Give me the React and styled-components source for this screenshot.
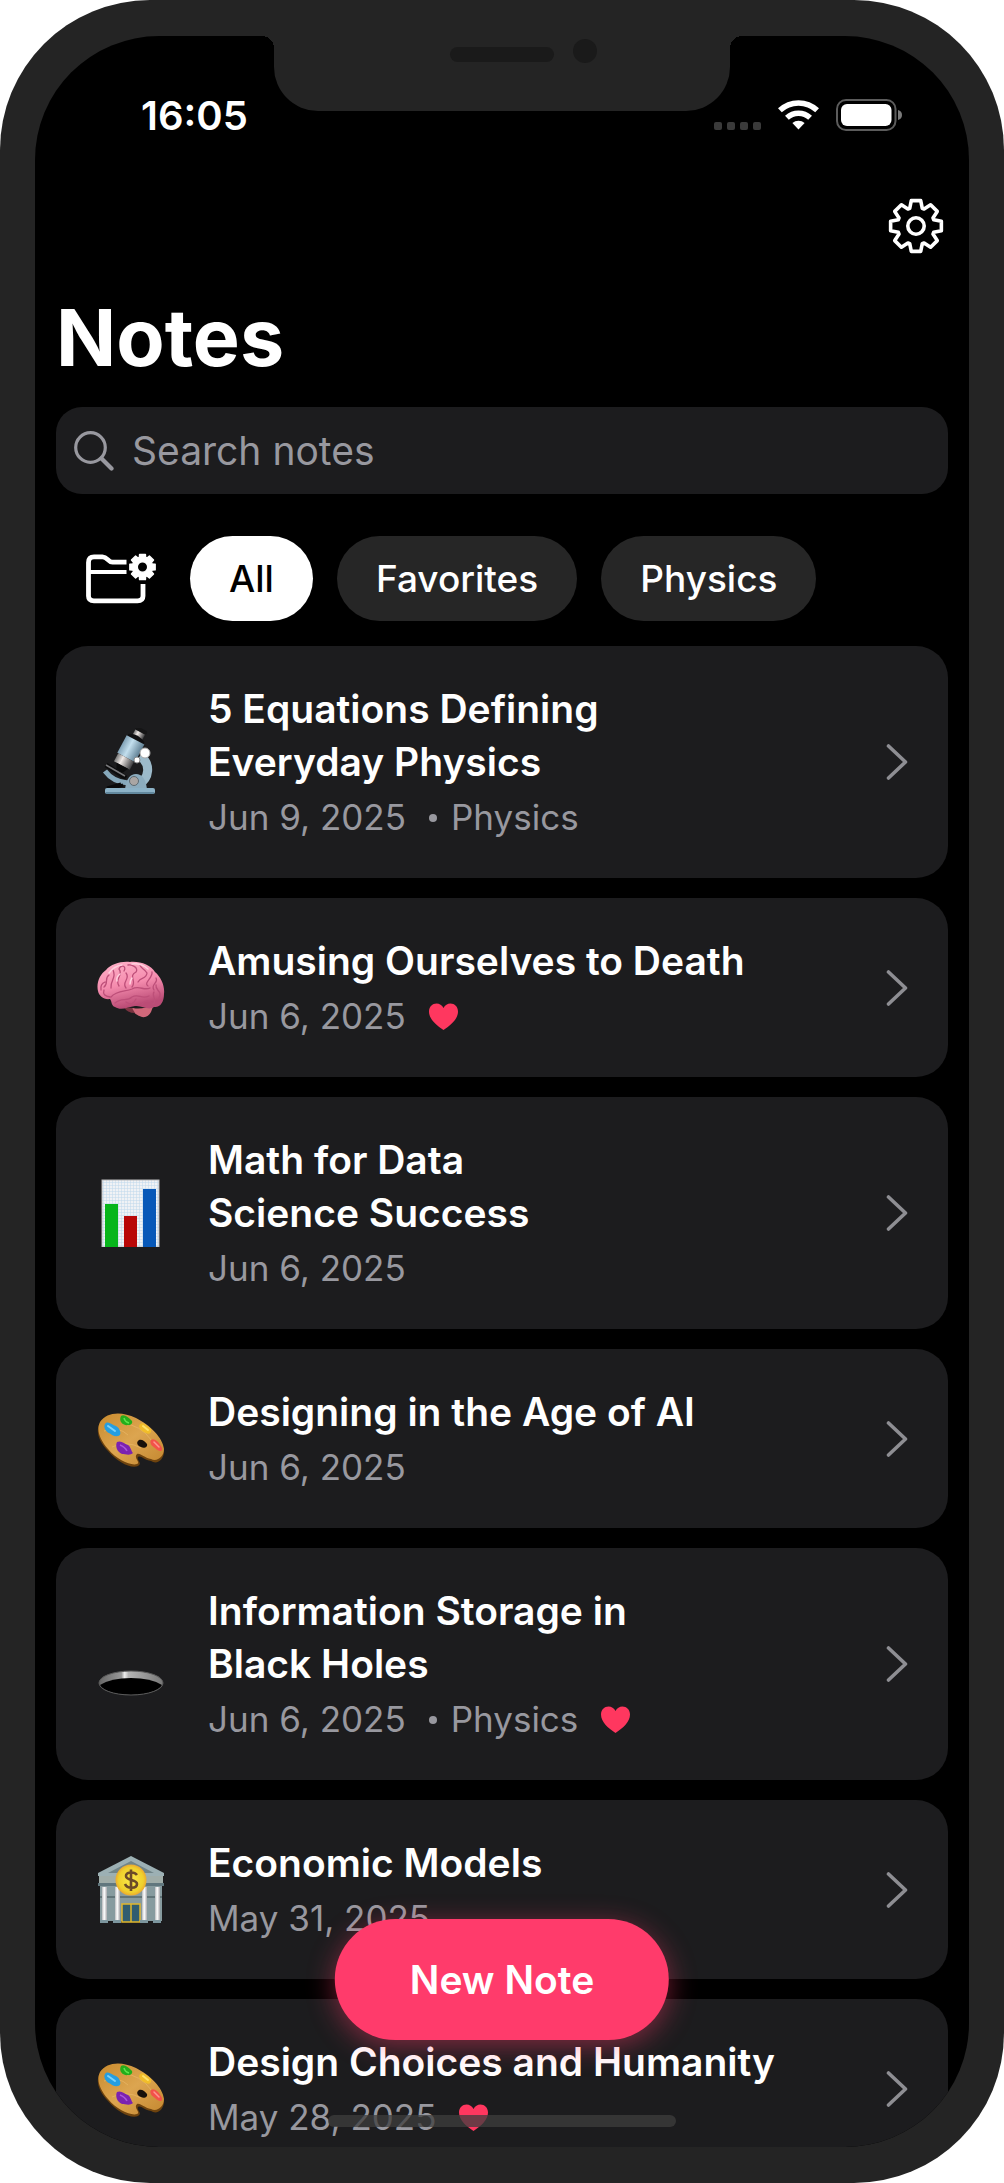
import React, { useState } from 'react'
import styled, { createGlobalStyle } from 'styled-components'


const GlobalStyle = createGlobalStyle`
    * {
        box-sizing: border-box;
    }
    body {
        margin: 0;
        background: #ffffff;
        font-family: Inter, "Liberation Sans", sans-serif;
    }
    button, input {
        font-family: inherit;
    }
`

const Phone = styled.div`
    height: 100vh;
    padding: 36px 35px;
    background: #242424;
    border-radius: 150px;
    display: flex;
`

const Screen = styled.div`
    position: relative;
    flex: 1;
    min-width: 0;
    overflow: hidden;
    border-radius: 124px;
    background: #000000;
    color: #ffffff;
    display: flex;
    flex-direction: column;
`

const Notch = styled.div`
    position: absolute;
    top: 0;
    left: 50%;
    width: 456px;
    height: 75px;
    margin-left: -228px;
    background: #242424;
    border-radius: 0 0 44px 44px;

    &::before, &::after {
        content: '';
        position: absolute;
        top: 0;
        width: 12px;
        height: 12px;
    }
    &::before {
        right: 100%;
        background: radial-gradient(circle at 0 100%, transparent 12px, #242424 12px);
    }
    &::after {
        left: 100%;
        background: radial-gradient(circle at 100% 100%, transparent 12px, #242424 12px);
    }
`

const Speaker = styled.div`
    position: absolute;
    top: 11px;
    left: 176px;
    width: 104px;
    height: 15px;
    border-radius: 8px;
    background: #1a1a1a;
`

const Camera = styled.div`
    position: absolute;
    top: 3px;
    left: 299px;
    width: 24px;
    height: 24px;
    border-radius: 50%;
    background: #1a1a1a;
`

const StatusBar = styled.div`
    display: flex;
    justify-content: space-between;
    align-items: center;
    padding: 56px 67px 0 106px;
`

const Time = styled.span`
    font-size: 40px;
    line-height: 48px;
    font-weight: 600;
`

const StatusIcons = styled.div`
    display: flex;
    align-items: center;
    gap: 17px;
    padding-bottom: 2px;
`

const Content = styled.div`
    flex: 1;
    min-height: 0;
    display: flex;
    flex-direction: column;
    padding: 0 21px;
`

const IconButton = styled.button`
    display: flex;
    padding: 0;
    border: none;
    background: none;
    color: #ffffff;
    cursor: pointer;
`

const Toolbar = styled.div`
    display: flex;
    justify-content: flex-end;
    padding: 58px 4px 34px 0;
`

const Heading = styled.h1`
    margin: 0 0 21px;
    font-size: 79px;
    line-height: 98px;
    font-weight: 700;
`

const SearchBox = styled.label`
    display: flex;
    align-items: center;
    flex-shrink: 0;
    gap: 18px;
    height: 87px;
    padding: 0 18px;
    border-radius: 26px;
    background: #1c1c1e;
    color: #98989f;
`

const SearchInput = styled.input`
    flex: 1;
    min-width: 0;
    padding: 0;
    border: none;
    outline: none;
    background: none;
    color: #ffffff;
    font-size: 39px;
    line-height: 48px;

    &::placeholder {
        color: #98989f;
        opacity: 1;
    }
`

const Filters = styled.div`
    display: flex;
    align-items: center;
    gap: 24px;
    margin: 42px 0 25px;
    padding-left: 30px;
`

const FolderButton = styled(IconButton)`
    margin-right: 10px;
`

const Chip = styled.button`
    height: 85px;
    padding: 0 39px;
    border: none;
    border-radius: 43px;
    background: ${(props) => (props.$selected ? '#ffffff' : '#262626')};
    color: ${(props) => (props.$selected ? '#000000' : '#ffffff')};
    font-size: 37px;
    font-weight: 500;
    cursor: pointer;
`

const NoteList = styled.ul`
    margin: 0;
    padding: 0;
    list-style: none;
    display: flex;
    flex-direction: column;
    gap: 20px;
`

const NoteCard = styled.a`
    display: flex;
    align-items: center;
    gap: 43px;
    padding: 36px 40px 36px 41px;
    border-radius: 32px;
    background: #1c1c1e;
    color: #ffffff;
    text-decoration: none;

    svg {
        flex-shrink: 0;
    }
`

const NoteText = styled.div`
    flex: 1;
    min-width: 0;
    display: flex;
    flex-direction: column;
    gap: 5px;
`

const NoteTitle = styled.h2`
    margin: 0;
    font-size: 39px;
    line-height: 53px;
    font-weight: 600;
    white-space: pre-line;
`

const Meta = styled.div`
    display: flex;
    align-items: center;
    gap: 23px;
    color: #98989f;
    font-size: 35px;
    line-height: 49px;
`

const Folder = styled.span`
    display: flex;
    align-items: center;
    gap: 14px;

    &::before {
        content: '';
        width: 8px;
        height: 8px;
        border-radius: 50%;
        background: currentColor;
    }
`

const NewNote = styled.button`
    position: absolute;
    left: 50%;
    bottom: 107px;
    transform: translateX(-50%);
    height: 121px;
    padding: 0 75px;
    border: none;
    border-radius: 61px;
    background: #ff3b6b;
    box-shadow: 0 6px 28px rgba(255, 59, 107, 0.45);
    color: #ffffff;
    font-size: 39px;
    font-weight: 600;
    white-space: nowrap;
    cursor: pointer;
`

const HomeIndicator = styled.div`
    position: absolute;
    left: 50%;
    bottom: 20px;
    width: 348px;
    height: 12px;
    margin-left: -174px;
    border-radius: 6px;
    background: rgba(62, 62, 62, 0.75);
`


// closed outline of a cog with eight teeth, centred on 0,0
const cogPath = (tip, root, tipAngle, rootAngle) => {
    const points = []
    for (let i = 0; i < 8; i++) {
        const steps = [[-rootAngle, root], [-tipAngle, tip], [tipAngle, tip], [rootAngle, root]]
        steps.forEach(([angle, r]) => {
            const a = ((i * 45 + angle) * Math.PI) / 180
            points.push(`${(r * Math.sin(a)).toFixed(2)} ${(-r * Math.cos(a)).toFixed(2)}`)
        })
    }
    return `M${points.join('L')}Z`
}

const GearIcon = () => (
    <svg width="56" height="56" viewBox="-28 -28 56 56" fill="none" stroke="currentColor" strokeWidth="3.6" strokeLinejoin="round">
        <path d={cogPath(25.8, 18.8, 10.5, 19.5)} />
        <circle r="8.2" />
    </svg>
)

const FolderGearIcon = () => (
    <svg width="70" height="52" viewBox="0 0 70 52" fill="none" stroke="currentColor" strokeWidth="4.8">
        <path d="M40.500 9.200H26.500C22 9.200 21.500 3.800 16.500 3.800H8Q2.500 3.800 2.500 9.500V43Q2.500 47.800 8 47.800H51.500Q57 47.800 57 43V31" />
        <path d="M3 19H40.500" strokeWidth="4" />
        <path
            transform="translate(56.500 14)"
            fill="currentColor"
            fillRule="evenodd"
            strokeWidth="1.400"
            strokeLinejoin="round"
            d={`${cogPath(13, 10, 13, 18.5)}M5.200 0A5.200 5.200 0 1 0 -5.200 0A5.200 5.200 0 1 0 5.200 0Z`}
        />
    </svg>
)

const SearchIcon = () => (
    <svg width="40" height="40" viewBox="0 0 40 40" fill="none" stroke="currentColor" strokeLinecap="round">
        <circle cx="16.500" cy="16.500" r="14.800" strokeWidth="3.200" />
        <path d="M27.500 27.500L37.500 37.500" strokeWidth="4.200" />
    </svg>
)

const SignalIcon = () => (
    <svg width="47" height="32" viewBox="0 0 47 32" fill="#3a3a3a">
        <rect x="0" y="23" width="8" height="8" rx="2" />
        <rect x="13" y="23" width="8" height="8" rx="2" />
        <rect x="26" y="23" width="8" height="8" rx="2" />
        <rect x="39" y="23" width="8" height="8" rx="2" />
    </svg>
)

const WifiIcon = () => (
    <svg width="41" height="32" viewBox="0 0 41 32" fill="none" stroke="#ffffff" strokeWidth="5.500">
        <path d="M1.900 11.300A27.200 27.200 0 0 1 39.100 11.300" />
        <path d="M8.900 18.700A17 17 0 0 1 32.100 18.700" />
        <path d="M20.500 30.500L14.400 24.100A9 9 0 0 1 26.600 24.100Z" fill="#ffffff" stroke="none" />
    </svg>
)

const BatteryIcon = () => (
    <svg width="66" height="32" viewBox="0 0 66 32">
        <rect x="1" y="1" width="58.500" height="30" rx="9" fill="none" stroke="#5c5c5c" strokeWidth="2" />
        <rect x="5" y="5" width="50.500" height="22" rx="6" fill="#ffffff" />
        <path d="M62 11Q66 12 66 16T62 21Z" fill="#7a7a7a" />
    </svg>
)

const ChevronIcon = () => (
    <svg width="22" height="36" viewBox="0 0 22 36" fill="none" stroke="#8e8e93" strokeWidth="3.600" strokeLinecap="round" strokeLinejoin="round">
        <path d="M2.500 2L19.500 18L2.500 34" />
    </svg>
)

const HeartIcon = () => (
    <svg width="29" height="28" viewBox="0 0 29 28" fill="#ff375f" role="img" aria-label="Favorite">
        <path d="M14.500 27C7 22 0 16 0 8.500C0 3.500 3.500 0.500 7.500 0.500C10.500 0.500 13 2 14.500 5C16 2 18.500 0.500 21.500 0.500C25.500 0.500 29 3.500 29 8.500C29 16 22 22 14.500 27Z" />
    </svg>
)

const Microscope = () => (
    <svg width="68" height="68" viewBox="0 0 68 68">
        <defs>
            <linearGradient id="scopeTube" x1="0" x2="1">
                <stop offset="0" stopColor="#7fa0b5" />
                <stop offset="0.4" stopColor="#c3dfee" />
                <stop offset="1" stopColor="#5f7f93" />
            </linearGradient>
            <linearGradient id="scopeSteel" x1="0" x2="1">
                <stop offset="0" stopColor="#777" />
                <stop offset="0.350" stopColor="#f2ece9" />
                <stop offset="1" stopColor="#3c3c3e" />
            </linearGradient>
        </defs>
        <path d="M9 37L29 50" stroke="#0c0c0d" strokeWidth="5" />
        <path d="M9 37L28 48" stroke="#77777a" strokeWidth="1.500" />
        <path d="M8 43Q16 54 31 55" fill="none" stroke="#86a8bb" strokeWidth="5" />
        <path d="M10 60L24 56M10 62L26 57" stroke="#09090a" strokeWidth="3" />
        <path d="M43 28C54 36 53 50 41 57" fill="none" stroke="#9cbaca" strokeWidth="9" />
        <path d="M28 61Q30 46 39 46Q48 46 50 61Z" fill="#8cacbe" />
        <circle cx="37" cy="53" r="4.500" fill="#aaa6a4" stroke="#5d6a72" />
        <rect x="8" y="60" width="50" height="6" rx="2" fill="#8cb2c7" />
        <path d="M9 65H57" stroke="#557a90" strokeWidth="1.500" />
        <g transform="rotate(28 32 22)">
            <rect x="28" y="-1" width="11" height="9" rx="2" fill="url(#scopeSteel)" />
            <rect x="27" y="-3" width="13" height="4" rx="2" fill="#151516" />
            <path d="M24 8Q32 3 42 8V12H24Z" fill="#101012" />
            <rect x="23" y="10" width="20" height="20" fill="url(#scopeTube)" />
            <rect x="24" y="30" width="18" height="9" fill="url(#scopeSteel)" />
            <path d="M27 39H40L37 45H30Z" fill="#0b0b0c" />
        </g>
        <circle cx="48" cy="25" r="5" fill="#fff" stroke="#a8a8a8" />
        <circle cx="40" cy="32" r="3" fill="#fff" stroke="#888" />
    </svg>
)

const Brain = () => (
    <svg width="68" height="68" viewBox="0 2 68 68">
        <defs>
            <linearGradient id="brainFill" x1="0" y1="0" x2="0.300" y2="1">
                <stop offset="0" stopColor="#ffb3c9" />
                <stop offset="0.550" stopColor="#f58cae" />
                <stop offset="1" stopColor="#bb4c76" />
            </linearGradient>
        </defs>
        <path d="M36 56Q46 58 57 52L54 60Q51 66 45 65Q38 63 34 57Z" fill="#d0687a" />
        <path d="M27 55L35 56L38 61Q30 61 27 55Z" fill="#7a3340" />
        <path d="M1 39C-1 31 3 22 9 18C14 12 24 9 33 10C43 9 54 13 58 20C64 25 68 34 67 42C67 50 63 56 57 55C51 59 45 53 38 54C31 55 24 59 18 55C14 54 15 49 13 47C7 48 2 44 1 39Z" fill="url(#brainFill)" />
        <path d="M14 45C20 38 29 40 35 37C42 33 47 39 53 36M18 51C25 45 30 50 35 45C42 41 44 48 52 44M29 50Q35 55 39 47M13 45Q5 44 7 38M7 35C12 31 7 26 12 23M14 36C13 28 20 26 16 18M22 34C17 27 27 23 22 17C24 12 30 14 27 19M29 36C24 30 34 27 29 21M35 35C40 29 31 24 39 20C42 16 35 12 31 13M41 30C44 24 49 28 50 21C47 16 44 17 43 13M51 34C46 31 56 26 55 20M57 38C53 32 62 31 59 26M62 46C66 39 58 39 59 33M56 52C61 48 54 44 57 40M45 52Q49 47 54 50M8 30Q3 32 4 38" fill="none" stroke="#bd4f79" strokeWidth="1.300" strokeLinecap="round" />
        <path d="M12 21Q17 14 25 13M35 12Q44 11 51 17M20 29Q19 25 23 22M33 32Q33 29 35 26" fill="none" stroke="#ffd0de" strokeWidth="1.500" strokeLinecap="round" />
    </svg>
)

const BarChart = () => (
    <svg width="68" height="68" viewBox="0 0 68 68">
        <defs>
            <pattern id="chartGrid" width="3" height="3" patternUnits="userSpaceOnUse">
                <rect width="3" height="3" fill="#f0f2f5" />
                <path d="M0 0H3M0 0V3" stroke="#bfd8ec" strokeWidth="1" />
            </pattern>
        </defs>
        <rect x="5" y="1" width="57" height="67" fill="url(#chartGrid)" stroke="#b8b8ba" />
        <rect x="8" y="25" width="13" height="43" fill="#07b51b" />
        <rect x="27" y="37" width="13" height="31" fill="#b80707" />
        <rect x="46" y="10" width="13" height="58" fill="#0758b8" />
    </svg>
)

const Palette = () => (
    <svg width="68" height="68" viewBox="0 1 68 68">
        <defs>
            <linearGradient id="wood" x1="0" y1="0" x2="1" y2="1">
                <stop offset="0" stopColor="#c98b2e" />
                <stop offset="0.500" stopColor="#dca550" />
                <stop offset="1" stopColor="#c4872f" />
            </linearGradient>
        </defs>
        <path d="M3 19C10 9 24 7 39 15C53 22 66 35 67 47C67 56 60 61 54 57C47 56 44 51 41 53C39 56 46 59 41 62C34 65 20 58 11 47C2 38-2 27 3 19Z" fill="#6e430e" />
        <path d="M3 18C10 8 24 7 39 14C53 21 66 34 67 45C67 53 60 58 54 55C47 54 44 49 40 50C36 54 44 58 40 60C34 62 20 56 11 45C3 36-1 26 3 18Z" fill="url(#wood)" />
        <path d="M7 27Q22 22 31 31M15 43Q30 36 44 44M26 20Q43 20 55 37" fill="none" stroke="#e8b868" strokeWidth="1" opacity="0.700" />
        <path d="M41 37C43 34 48 37 50 40C51 43 47 45 44 43C41 42 39 39 41 37Z" fill="#17100a" />
        <path d="M8 20C11 16 15 21 19 22C23 24 24 29 23 31C19 34 15 31 12 29C9 28 6 23 8 20Z" fill="#269ee0" />
        <path d="M11 22L18 27" stroke="#7bd2fa" strokeWidth="2" strokeLinecap="round" />
        <path d="M24 12C27 10 31 13 34 16C37 18 34 22 31 21C27 22 21 18 24 12Z" fill="#24ad1b" />
        <path d="M27 14Q28 18 32 19" fill="none" stroke="#5ee44a" strokeWidth="1.500" />
        <path d="M43 20C47 17 51 23 54 25C55 29 52 31 49 29C46 28 40 24 43 20Z" fill="#f1bd2a" />
        <path d="M46 22L51 26" stroke="#ffe26a" strokeWidth="2" strokeLinecap="round" />
        <path d="M54 36C57 33 63 39 65 44C66 49 61 47 58 44C55 42 52 39 54 36Z" fill="#f2524a" />
        <path d="M57 38L62 43" stroke="#ff9690" strokeWidth="1.500" strokeLinecap="round" />
        <path d="M20 38C24 36 28 40 31 41C34 43 34 47 36 49C33 52 28 50 25 50C20 48 18 42 20 38Z" fill="#7b22b0" />
        <path d="M23 41Q28 43 30 47" fill="none" stroke="#a855da" strokeWidth="1.500" />
    </svg>
)

const Hole = () => (
    <svg width="68" height="68" viewBox="0 0 68 68">
        <defs>
            <linearGradient id="holeRim" x1="0" x2="1">
                <stop offset="0" stopColor="#666" />
                <stop offset="0.350" stopColor="#999" />
                <stop offset="0.400" stopColor="#eee" />
                <stop offset="0.460" stopColor="#b5b5b5" />
                <stop offset="1" stopColor="#777" />
            </linearGradient>
        </defs>
        <ellipse cx="34" cy="53" rx="32" ry="12" fill="url(#holeRim)" />
        <path d="M3 55Q14 48 34 48T65 55C62 61 50 65 34 65S6 61 3 55Z" fill="#000" />
        <ellipse cx="34" cy="53" rx="32" ry="12" fill="none" stroke="#5a5a5a" />
    </svg>
)

const Bank = () => (
    <svg width="68" height="68" viewBox="0 0 68 68">
        <defs>
            <linearGradient id="column" x1="0" x2="1">
                <stop offset="0" stopColor="#b9b9bc" />
                <stop offset="0.450" stopColor="#ffffff" />
                <stop offset="1" stopColor="#a9a9ad" />
            </linearGradient>
            <radialGradient id="coin">
                <stop offset="0" stopColor="#fbe94a" />
                <stop offset="0.800" stopColor="#efd02c" />
                <stop offset="1" stopColor="#eba92f" />
            </radialGradient>
        </defs>
        <rect x="3" y="29" width="62" height="36" fill="#879b9f" />
        <path d="M3 41H65" stroke="#617478" strokeWidth="2" />
        <path d="M34 0L67 17V20H1V17Z" fill="#9cb0b4" />
        <path d="M34 5L57 17H11Z" fill="#718589" />
        <rect x="2" y="20" width="64" height="7" fill="#a0ada9" />
        <rect x="1" y="27" width="66" height="3" fill="#61777e" />
        <rect x="25" y="48" width="18" height="18" fill="#315d70" stroke="#e1b72d" strokeWidth="1.500" />
        <path d="M34 48V66" stroke="#e1b72d" strokeWidth="1.500" />
        {[5, 18, 45, 58].map((x) => (
            <g key={x}>
                <rect x={x} y="31" width="5" height="33" fill="url(#column)" />
                <rect x={x - 2} y="64" width="8" height="3" fill="#7c969e" />
            </g>
        ))}
        <circle cx="34" cy="24" r="15.500" fill="url(#coin)" />
        <path d="M40 19C37 15 29 16 29 20C29 25 40 23 40 28C40 33 30 33 28 28M34 13.500V35" fill="none" stroke="#6c4b28" strokeWidth="2.600" />
    </svg>
)


const filters = ['All', 'Favorites', 'Physics']

const notes = [
    { title: '5 Equations Defining\nEveryday Physics', date: 'Jun 9, 2025', folder: 'Physics', Icon: Microscope },
    { title: 'Amusing Ourselves to Death', date: 'Jun 6, 2025', favorite: true, Icon: Brain },
    { title: 'Math for Data\nScience Success', date: 'Jun 6, 2025', Icon: BarChart },
    { title: 'Designing in the Age of AI', date: 'Jun 6, 2025', Icon: Palette },
    { title: 'Information Storage in\nBlack Holes', date: 'Jun 6, 2025', folder: 'Physics', favorite: true, Icon: Hole },
    { title: 'Economic Models', date: 'May 31, 2025', Icon: Bank },
    { title: 'Design Choices and Humanity', date: 'May 28, 2025', favorite: true, Icon: Palette },
]

const Note = ({ note }) => {
    const { Icon } = note
    return (
        <li>
            <NoteCard href="#">
                <Icon />
                <NoteText>
                    <NoteTitle>{note.title}</NoteTitle>
                    <Meta>
                        <span>{note.date}</span>
                        {note.folder && <Folder>{note.folder}</Folder>}
                        {note.favorite && <HeartIcon />}
                    </Meta>
                </NoteText>
                <ChevronIcon />
            </NoteCard>
        </li>
    )
}

export default function App() {
    const [filter, setFilter] = useState('All')
    const [search, setSearch] = useState('')

    const shown = notes.filter((note) => {
        if (filter === 'Favorites' && !note.favorite) return false
        if (filter === 'Physics' && note.folder !== 'Physics') return false
        return note.title.toLowerCase().includes(search.toLowerCase())
    })

    return (
        <Phone>
            <GlobalStyle />
            <Screen>
                <Notch>
                    <Speaker />
                    <Camera />
                </Notch>
                <StatusBar>
                    <Time>16:05</Time>
                    <StatusIcons>
                        <SignalIcon />
                        <WifiIcon />
                        <BatteryIcon />
                    </StatusIcons>
                </StatusBar>
                <Content>
                    <Toolbar>
                        <IconButton aria-label="Settings"><GearIcon /></IconButton>
                    </Toolbar>
                    <Heading>Notes</Heading>
                    <SearchBox>
                        <SearchIcon />
                        <SearchInput
                            type="text"
                            aria-label="Search notes"
                            placeholder="Search notes"
                            value={search}
                            onChange={(e) => setSearch(e.target.value)}
                        />
                    </SearchBox>
                    <Filters>
                        <FolderButton aria-label="Manage folders"><FolderGearIcon /></FolderButton>
                        {filters.map((name) => (
                            <Chip key={name} $selected={name === filter} onClick={() => setFilter(name)}>{name}</Chip>
                        ))}
                    </Filters>
                    <NoteList>
                        {shown.map((note) => <Note key={note.title} note={note} />)}
                    </NoteList>
                </Content>
                <NewNote>New Note</NewNote>
                <HomeIndicator />
            </Screen>
        </Phone>
    )
}
